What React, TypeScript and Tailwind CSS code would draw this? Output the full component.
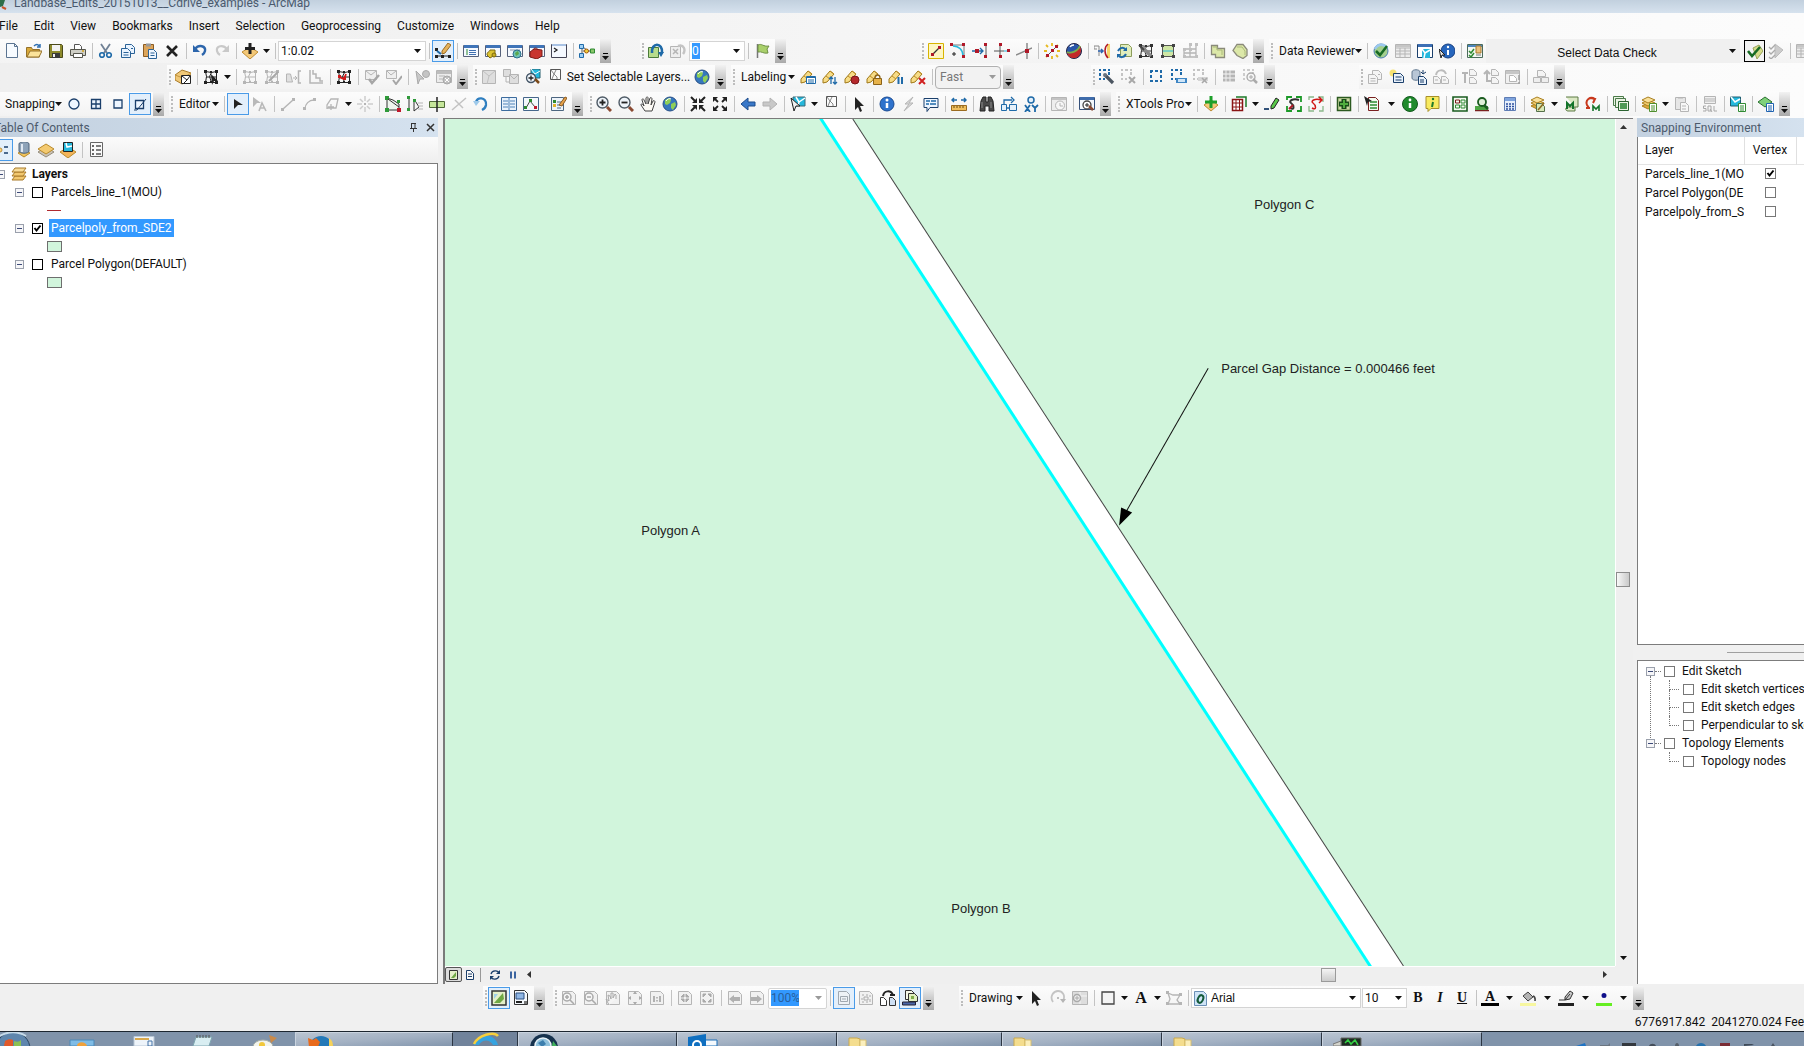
import React from "react";
import clsx from "clsx";

// [path data, fill, stroke, stroke width]
type Shape = [string, string, string?, number?];

const GRAY = "#b5b5b5";
const INK = "#222222";
const RED = "#b01828";
const BLUE = "#1f6aa8";
const NAVY = "#1b3f6b";
const GREEN = "#2f8a32";
const BROWN = "#8a6a20";
const CYAN = "#25b8dc";

const dot = (x: number, y: number, r: number) =>
  `M${x - r} ${y}a${r} ${r} 0 1 0 ${r * 2} 0a${r} ${r} 0 1 0 ${-r * 2} 0z`;
const sq = (x: number, y: number, s: number) => `M${x} ${y}h${s}v${s}h${-s}z`;
const box = (x: number, y: number, w: number, h: number) =>
  `M${x} ${y}h${w}v${h}h${-w}z`;
const page = (x: number, y: number, w: number, h: number) =>
  `M${x} ${y}h${w - 3}l3 3v${h - 3}h${-w}z`;

const mesh = (color: string): Shape[] => [
  ["M2.5 2.5l6 1 5-1M2.5 2.5l1 5-1 6h11v-11M8.5 3.5l-2 4 2 6M3 8h10", "none", color],
  [sq(1, 1, 3) + sq(7, 2, 2) + sq(12, 1, 3) + sq(1, 12, 3) + sq(7, 12, 2) + sq(12, 12, 3), color],
];
const pencil: Shape[] = [
  ["M1 10L8 2l4 3-7 8-4 1z", "#f7dc86", "#a07818"],
  ["M8 2l4 3M4 7l4 3", "none", "#c08f28"],
];
const windowBase: Shape[] = [
  [box(0.5, 2.5, 15, 11), "#f5f9ff", "#56617a"],
  [box(1, 2, 14, 3), "#3f74b8"],
];
const globe: Shape[] = [
  [dot(8, 8, 7), "#3677bd", "#274f86"],
  ["M3 4l4-2 2 2-1 3-3 2-2-1zM9 8l4-2 1 3-3 5-2-2z", "#8fcf57"],
  ["M4 5c1-2 4-3 5-2", "none", "#ffffff"],
];
const dashed = (color: string): Shape => [
  "M1 2h3M6 2h3M11 2h2M2 1v3M2 6v3M2 11v2M1 12h3M6 12h3M11 12h2M12 1v3M12 6v3M12 11v2",
  "none",
  color,
  2,
];
// small marquee for tools that carry a second mark at the bottom right
const dashedSmall = (color: string): Shape => [
  "M0 1h2M4 1h3M9 1h2M1 0v2M1 4v3M1 9v2M4 10h2M10 3v3",
  "none",
  color,
  2,
];
const docs = (color: string, fill = "#f4f4f4"): Shape[] => [
  [page(5.5, 1.5, 9, 9), fill, color],
  [page(1.5, 5.5, 9, 9), fill, color],
  ["M3.5 9.5h5M3.5 12h5M11 5.5h2", "none", color],
];
const lens = (color: string): Shape => ["M10 10l4 4", "none", color, 2.5];
const pageGray: Shape[] = [[page(1.5, 1.5, 13, 13), "#f1f1f1", GRAY]];
const stack: Shape[] = [
  ["M1 10l6-3 7 3-7 3z", "#dba93c", "#a98020"],
  ["M1 7l6-3 7 3-7 3z", "#f2cc70", "#a98020"],
  ["M1 4l6-3 7 3-7 3z", "#f9e09a", "#a98020"],
];
const listTag = (color: string): Shape[] => [
  [box(8.5, 7.5, 7, 8), "#ffffff", color],
  ["M10 10h4M10 12h4M10 14h4", "none", color],
];

const ICONS: Record<string, Shape[]> = {
  // standard
  new: [[page(2.5, 0.5, 11, 14), "#f7fbff", "#5b7491"], ["M10.5 .5v3h3", "none", "#5b7491"]],
  open: [
    ["M.5 14V4.5h5l1 2h7V14z", "#d9a93a", "#94712a"],
    ["M1 14l3-6h12l-3 6z", "#fbe39a", "#94712a"],
    ["M8 3c2-2 4-2 5 0M14 1v3h-3", "none", "#2f6fb2", 1.5],
  ],
  save: [
    ["M1.5 1.5h12l1 1v12h-13z", "#8d8a2c", "#4b4a1a"],
    [box(4, 2, 8, 6), "#f3f3f3"],
    [box(4, 10, 8, 5), "#3a3a3a"],
    [box(5, 11, 2, 3), "#eeeeee"],
  ],
  print: [
    ["M4.5 6V1.5h5l2 2V6", "#ffffff", "#555555"],
    ["M.5 6.5h15v6h-15z", "#cfcfc6", "#55554c"],
    ["M3.5 10.5h9v4h-9z", "#ffffff", "#55554c"],
    ["M12 8h2", "none", "#d0a020", 1.5],
  ],
  cut: [
    ["M3 1l6 9M12 1L6 10", "none", "#708195", 1.8],
    [dot(4, 12, 2.3) + dot(11, 12, 2.3), "none", BLUE, 1.6],
  ],
  copy: docs("#2a6297", "#eaf4ff"),
  paste: [
    [box(1.5, 1.5, 10, 12), "#dca55b", "#8a5b21"],
    [box(4, 0.5, 5, 3), "#999999"],
    [page(6.5, 6.5, 8, 9), "#eef6ff", "#2a6297"],
    ["M8.5 10h4M8.5 12.5h4", "none", "#2a6297"],
  ],
  del: [["M3 3l10 10M13 3L3 13", "none", INK, 2.6]],
  undo: [["M3 6c4-5 11-3 10 2-.4 2-1.5 3-3 4", "none", "#2d66ac", 2.4], ["M1 2v7h7z", "#2d66ac"]],
  redo: [["M13 6C9 1 2 3 3 8c.4 2 1.5 3 3 4", "none", "#c9c9c9", 2.2], ["M15 2v7H8z", "#c9c9c9"]],
  add: [["M0 9l8-5 8 5-8 7z", "#f3c878", "#bd8c35"], ["M8 0v11M3 5.5h10", "none", INK, 3]],
  edit: [
    ["M1 13h14", "none", INK],
    [sq(0, 5, 3) + sq(0, 12, 3) + sq(6, 12, 3) + sq(13, 12, 3), INK],
    ["M7 8l6-8 3 2-6 8-3 1z", "#e6b25b", "#9a6b22"],
    ["M2 8l4 3", "none", BLUE, 2],
  ],
  toc: [...windowBase, ["M3 7h2M3 9h2M3 11h2", "none", GREEN], ["M6 7.5h7M6 9.5h7M6 11.5h7", "none", "#4070b0"]],
  catalog: [...windowBase, ["M2 12c0-4 2-2 3-5h5v5l-5 3z", "#ddc432", "#7d6a10"], [dot(9, 12, 2), "#c8ad22", "#7d6a10"]],
  search: [...windowBase, ["M3 7h10", "none", "#8a96a8"], [dot(10, 11, 4), "#6ec3b5", "#2c6e8e"], ["M8 10l3-2 1 3-3 2z", "#5ba84b"]],
  toolbox: [...windowBase, ["M1 9l4-3 8 1v6l-5 3-7-2z", "#c8362f", "#7d1a16"], ["M4 7c1-3 5-2 5 0", "none", "#7d1a16"]],
  python: [[box(0.5, 1.5, 15, 13), "#f5f9ff", "#444455"], [box(1, 1, 14, 2), "#a9c2e4"], ["M3 5l3 2-3 2", "none", INK, 1.3]],
  model: [
    ["M3 4v9M4 4l5 4H4M8 8h4", "none", "#555555"],
    [sq(0.5, 1.5, 4) + sq(0.5, 10.5, 4), "#9fd0f5", BLUE],
    [dot(7.5, 8, 2), "#f5d23a", "#a05a10"],
    [sq(11.5, 6, 4), "#8ac76a", GREEN],
  ],

  // versioning
  reload: [
    [box(0.5, 4.5, 10, 10), "#b7dc8c", "#4b7a3a"],
    ["M4 10c-1-11 11-11 10 0", "none", BLUE, 2.6],
    ["M10 9h6l-3 5z", BLUE],
  ],
  reloadx: [
    [box(0.5, 3.5, 10, 11), "#eeeeee", GRAY],
    ["M3 6l5 5M8 6l-5 5", "none", GRAY, 1.5],
    ["M8 3c6-2 8 4 5 8", "none", "#c4c4c4", 2.4],
  ],
  flag: [["M3.5 1v14", "none", "#777777", 1.5], ["M4 2c4-2 5 2 11 1l-2 3 1 4c-5 1-6-2-10-1z", "#a9d06b", "#6e8f45"]],

  // advanced editing
  eLine: [
    [box(0.5, 0.5, 15, 15), "#fdf6c4", "#d8b400"],
    ["M4 12L12 4", "none", "#333333", 1.3],
    [sq(3, 10, 3) + sq(10, 3, 3), RED],
  ],
  eCurve: [["M2 2h12v12", "none", "#777777"], ["M3 3c6 0 10 4 10 10", "none", CYAN, 1.5], [sq(0, 0, 3) + sq(12, 0, 3) + sq(12, 12, 3), RED], ["M4 9v4M2 11h4", "none", INK]],
  eExt: [["M14 1v14", "none", "#555555"], ["M0 8h11M8 5l3 3-3 3", "none", BLUE, 1.3], [sq(12, 0, 3) + sq(12, 12, 3) + sq(3, 6, 4), RED]],
  eTrim: [["M6 1v14M0 8h10", "none", "#555555"], ["M10 8h3", "none", CYAN], [sq(5, 0, 3) + sq(5, 12, 3) + sq(13, 6, 3), RED]],
  eInt: [["M0 12L16 5M11 0v16", "none", "#8a8a8a", 1.5], [sq(9, 6, 4), RED]],
  burst: [
    ["M2 2l2 2M8 0v3M14 2l-2 2M0 8h3M13 8h3M2 14l2-2M8 13v3M14 14l-2-2", "none", "#e7b91e", 1.8],
    ["M4 12L12 4", "none", "#555555"],
    [sq(2, 11, 3) + sq(7, 6, 3) + sq(11, 2, 3), RED],
  ],
  ball: [[dot(8, 8, 7.5), "#2a56a8", "#222244"], ["M1 10C4 12 13 8 14 3c3 6-1 12-6 12-4 0-6-2-7-5z", "#c22a2a"], ["M1 9c4 2 11-1 13-6", "none", "#7fae4a", 1.8], ["M4 4c1-2 3-2 4-2", "none", "#ffffff", 1.5]],
  alignE: [["M0 3h5v10M0 3v3h3", "none", "#888888"], ["M4 8h5M7 6l2 2-2 2", "none", "#2c63b0", 1.5], [box(13, 1, 3, 14), "#f6d56a"], ["M14 1c-4 3-4 10 0 14", "none", RED, 1.5]],
  swap: [[page(4.5, 1.5, 11, 12), "#e1eebc", "#8c9c5c"], ["M2 8c2-4 6-4 8-1M10 11c-2 4-6 4-8 1", "none", BLUE, 2], ["M11 4v4H7zM1 15v-4h4z", BLUE]],
  wrenchE: [...mesh("#333333"), ["M4 4l9 9", "none", "#8a8a8a", 3.5], ["M1 2l5 5", "none", "#444444", 2]],
  rectE: [[box(2.5, 2.5, 11, 11), "#cfe6a4", "#555555"], ["M3 8h10", "none", CYAN], [sq(1, 1, 3) + sq(12, 1, 3) + sq(1, 12, 3) + sq(12, 12, 3), "#444444"]],
  gridE: [["M2 6h12v8H2zM8 1v13M14 1v5M2 10h12", "none", GRAY, 1.3], [sq(7, 0, 3) + sq(13, 0, 3) + sq(1, 5, 3) + sq(7, 5, 3) + sq(1, 12, 3) + sq(13, 12, 3), "#c0c0c0"]],
  polyA: [["M1.5 2.5h6v3h7v9h-9v-3h-4z", "#dce8a8", "#8a8a7a", 1.3], ["M3 4h4v3h5v5", "none", "#aab87a"]],
  polyB: [["M5 1.5h6l4 5v6l-4 3-6-3-4-5z", "#dce8a8", "#8a8a7a", 1.3], ["M5 4h5l3 4v4", "none", "#aab87a"]],

  // data reviewer
  rev: [[dot(8, 8, 7), "#a3cf8e", "#4a7db2"], ["M2 6c3-6 10-5 12-1", "none", "#9bc8ee", 2.5], ["M3 8l4 4 7-9", "none", "#176b24", 2.5]],
  table: [[box(0.5, 1.5, 15, 13), "#ececec", GRAY], ["M1 5h14M1 8h14M1 11h14M5 5v9M10 5v9", "none", GRAY], [box(1, 2, 14, 2), "#c6c6c6"]],
  win: [[box(0.5, 1.5, 15, 13), "#ffffff", NAVY], [box(1, 1, 14, 3), "#3d6fb4"], [box(5, 6, 8, 9), CYAN], ["M5 6l3 4 5-3M8 10l-1 5", "none", "#ffffff", 1.5]],
  infoSel: [[dot(9, 8, 7), "#2766bd", "#173f80"], ["M9 7v5", "none", "#ffffff", 2], [dot(9, 4, 1.2), "#ffffff"], ["M0 6l6 6H3l-1 3z", "#e8e8e8", INK]],
  checks: [[box(0.5, 1.5, 15, 13), "#f4f8f4", "#4b6b5a"], [box(1, 2, 14, 2), "#4d86bd"], ["M2 8l2 2 3-4M2 12l2 2 3-4", "none", GREEN, 1.5], [box(9, 3, 5, 7), "#ecc27b", "#a8772c"], ["M9 12h5", "none", "#777777"]],
  runCheck: [["M6 5l6-3 4 6-6 8z", "#d5dc8a", "#9aa45a"], ["M1 8l4 5 8-9", "none", "#176b24", 2.6]],
  runGray: [["M7 1l8 6-8 8z", "#cccccc", "#bbbbbb"], ["M1 4l2 2 4-4M1 9l2 2 4-4M1 14l2 2 4-4", "none", "#aaaaaa", 1.3]],

  // topology
  topo: [["M0 6l7-5 9 3v6l-9 5-7-4z", "#f0c878", "#a97b28"], ["M0 6l8 3 8-5", "none", "#c2943f"], [box(6.5, 6.5, 9, 8), "#ffffff", INK], ["M7 7l5 4 3-4M12 11l-3 3", "none", INK]],
  mesh: [...mesh(INK), ["M8 5l7 7h-4l-2 4z", INK]],
  meshG1: mesh(GRAY),
  meshG2: [...mesh(GRAY), ["M5 12l9-9", "none", "#a8a8a8", 2]],
  alignG: [["M.5 5h4l2 8h-6z", "#e0e0e0", GRAY], ["M7 9h4M9 7l2 2-2 2", "none", GRAY], ["M15 2h-2.5v12H15", "none", GRAY, 1.5]],
  stairG: [["M2 1v13h13M5 1v4h3v4h4v3h3", "none", GRAY, 1.5]],
  meshR: [...mesh(INK), ["M3 8l5 2 2-5", "none", "#d01818", 1.8], [sq(2, 6, 3) + sq(7, 8, 3), "#d01818"]],
  validG: [[box(1.5, 1.5, 11, 9), "#efefef", GRAY], ["M2 2l5 4 5-4", "none", GRAY], ["M5 10l3 4 7-8", "none", "#a6a6a6", 2.5]],
  valid2G: [[box(0.5, 1.5, 10, 8), "#efefef", GRAY], ["M1 2l4 4 5-4", "none", GRAY], ["M7 11l3 4 6-8", "none", "#a6a6a6", 2]],
  fixG: [["M2 2l8 8H6l-2 5z", "#c9c9c9", "#aaaaaa"], [dot(12, 5, 3.5), "#c4c4c4", "#aaaaaa"]],
  listxG: [[box(0.5, 1.5, 15, 12), "#ececec", GRAY], [box(1, 2, 14, 3), "#bdbdbd"], ["M3 7h6M3 10h6", "none", GRAY], [dot(11, 11, 4), "#c0c0c0", "#a8a8a8"], ["M9 9l4 4M13 9l-4 4", "none", "#ffffff"]],

  // selection
  selG: [[box(1.5, 1.5, 13, 13), "#dedede", GRAY], ["M2 2l6 5 6-5M8 7l-2 8", "none", "#c0c0c0"]],
  sel2G: [[box(0.5, 0.5, 7, 7), "#dedede", GRAY], [box(6.5, 5.5, 9, 9), "#dedede", GRAY], ["M7 6l4 4 4-4M3 8v5h3", "none", GRAY]],
  zoomSel: [[box(6, 0, 9, 9), CYAN, "#28606e"], ["M6 0l4 5 5-3", "none", "#ffffff"], [dot(6, 9, 4.5), "#eef4fa", "#445566", 1.3], ["M6 6.5v5M3.5 9h5", "none", INK, 1.3], lens("#7a4a1a")],
  clearSel: [[box(3.5, 0.5, 10, 10), "#fcfcfc", "#555555"], ["M4 1l3 4 2-4M7 5l-2 5M7 5l3 3v2", "none", "#888888"]],
  globe,

  // labeling
  lb1: [...pencil, [box(6.5, 7.5, 9, 7), "#ffffff", BLUE], [box(7, 7, 8, 2), BLUE], ["M8 11h6M8 13h6", "none", BLUE]],
  lb2: [...pencil, ["M9 15V8M7 10l2-2 2 2M13 8v7M11 13l2 2 2-2", "none", BLUE, 1.3]],
  lb3: [...pencil, [dot(11, 11, 4), "#b5282c", "#7a1518"]],
  lb4: [...pencil, [box(7.5, 9.5, 8, 6), "#e6b24a", "#8a6218"], ["M9 9c0-4 5-4 5 0", "none", "#8a6218", 1.3]],
  lb5: [...pencil, ["M10.5 8v7M14 8v7", "none", BLUE, 2]],
  lb6: [...pencil, ["M9 9l6 6M15 9l-6 6", "none", "#d02020", 2]],

  // areas
  dWrench: [dashedSmall(BLUE), ["M6 6l8 8", "none", "#4b5560", 3.2], [dot(6, 6, 2), "#6b7580"]],
  dX: [dashedSmall("#c4c4c4"), ["M8 8l6 6M14 8l-6 6", "none", "#a8a8a8", 2]],
  dNew: [dashed(BLUE)],
  dEdit: [dashedSmall(BLUE), [box(5, 9, 11, 5), "#3f86c4"], [box(7, 10, 7, 3), "#cfe5f7"]],
  dDel: [dashedSmall("#c4c4c4"), [box(5, 8, 10, 4), "#d5d5d5"], ["M9 9l5 5M14 9l-5 5", "none", "#a8a8a8", 1.6]],
  dGrid: [["M2 3h12M2 7h12M2 11h12", "none", GRAY, 3], ["M5 1v12M9 1v12", "none", "#eeeeee"]],
  dZoom: [dashedSmall("#cccccc"), [dot(8, 8, 4), "#f5f5f5", "#aaaaaa", 1.3], ["M8 6v4M6 8h4", "none", "#aaaaaa"], lens("#aaaaaa")],

  // job documents
  docsG: docs(GRAY),
  docNew: [[dot(4, 4, 3.5), "#f6e272"], [page(4.5, 4.5, 10, 9), "#e8f1fb", NAVY], ["M6.5 8h6M6.5 11h6", "none", NAVY]],
  docDb: [["M1 3c0-3 8-3 8 0v6c0 3-8 3-8 0z", "#b8c6d6", "#62788f"], [page(7.5, 7.5, 8, 8), "#e8f1fb", NAVY], ["M9 11h4M9 13h4M12 1v4M10 3l2 2 3-2", "none", NAVY]],
  docsArc: [[page(0.5, 7.5, 7, 7), "#f4f4f4", GRAY], [page(8.5, 7.5, 7, 7), "#f4f4f4", GRAY], ["M3 6c1-6 8-6 10-1", "none", "#bcbcbc", 2], ["M2 11h3M10 11h3", "none", GRAY]],
  docUp: [["M4 14V4M1 4h6", "none", GRAY, 2], [page(8.5, 0.5, 7, 6), "#f4f4f4", GRAY], [page(8.5, 8.5, 7, 6), "#f4f4f4", GRAY]],
  docDn: [["M4 2v10h4M1 5l3-3 3 3", "none", GRAY, 2], [page(8.5, 0.5, 7, 6), "#f4f4f4", GRAY], [page(8.5, 8.5, 7, 6), "#f4f4f4", GRAY]],
  winG: [[box(0.5, 1.5, 14, 13), "#f0f0f0", GRAY], [box(1, 2, 13, 3), "#c6c6c6"], [page(4.5, 6.5, 7, 6), "#ffffff", GRAY], ["M14 6v5M14 13v2", "none", "#a0a0a0", 1.5]],
  printG: [[page(4.5, 1.5, 8, 6), "#f4f4f4", GRAY], [box(0.5, 8.5, 7, 5), "#eeeeee", GRAY], [box(8.5, 8.5, 7, 5), "#eeeeee", GRAY]],

  // snapping and editor
  sPoint: [[dot(8, 8, 5), "#eef6ff", NAVY, 1.3]],
  sEnd: [[box(3.5, 3.5, 9, 9), "#eef6ff", NAVY, 1.3], ["M8 4v9M4 8h9", "none", NAVY, 1.3]],
  sVertex: [[box(4, 4, 8, 8), "#eef6ff", NAVY, 1.3]],
  sEdge: [[box(3.5, 4.5, 8, 8), "#eef6ff", NAVY, 1.3], ["M2 14h3L14 3", "none", NAVY]],
  arrow: [["M4 3l9 6H8l-4 4z", INK]],
  arrowA: [["M1 1l8 6H5l-4 4z", "#b9b9b9"], ["M7 15l3-8 4 8M8 12h4", "none", "#b9b9b9", 1.6]],
  sLine: [["M3 13L13 4", "none", GRAY, 1.5], [sq(1, 12, 3) + sq(12, 2, 3), GRAY]],
  sArc: [["M3 13c0-5 4-9 9-9", "none", GRAY, 1.3], [sq(1, 11, 3) + sq(11, 2, 3), GRAY]],
  sPoly: [["M3 13V9l4-6h7l-2 9H3M7 8v6M4 11h6", "none", GRAY, 1.3]],
  sBurst: [["M8 0v5M8 11v5M0 8h5M11 8h5M3 3l3 3M13 3l-3 3M3 13l3-3M13 13l-3-3", "none", "#cdcdcd", 1.5], [sq(7, 7, 2), GRAY]],
  vEdit: [["M2 2v12h12V8L8 4z", "#eef6ee", "#333333"], [sq(0, 0, 4) + sq(0, 12, 4) + sq(12, 4, 3), "#2f9a3a"], ["M3 3l11 8", "none", "#333333"], [sq(12, 12, 4), "#c0182c"]],
  vShape: [["M2 1v14M7 3v12l5-4z", "none", "#333333"], [sq(0, 0, 3) + sq(0, 12, 3) + sq(6, 3, 3), "#2f9a3a"], ["M11 7h5M11 10h5M11 13h5", "none", GRAY]],
  vCut: [["M.5 5.5h15v6H.5z", "#c5e69a", "#4f6b38"], ["M8 1v15", "none", INK, 1.5]],
  vSplit: [["M1 14L15 2M4 4l8 8", "none", "#c2c2c2", 1.5]],
  vRot: [["M3 7c0-7 11-6 10 2-.3 2-2 4-4 5", "none", "#2f7fc0", 2.3], ["M0 5h7l-4 5z", "#9ec9ea"]],
  attr: [[box(0.5, 1.5, 15, 13), "#e8f2fc", "#3d6c9e"], ["M8 2v12M2 5h5M2 8h5M2 11h5M9 5h5M9 8h5M9 11h5", "none", "#4f83b8"]],
  sketch: [[box(0.5, 1.5, 15, 13), "#f4f8fc", "#46678b"], ["M3 12l4-7 5 6", "none", "#444444"], [sq(1, 10, 3) + sq(6, 3, 3), GREEN], [sq(11, 10, 3), "#c0182c"]],
  tmpl: [[box(0.5, 1.5, 12, 13), "#eef4fa", "#4d6680"], [sq(2, 4, 3), GREEN], [sq(2, 8, 3), "#e2b12e"], ["M6 6h4M6 9h4M6 12h4", "none", "#4d6680"], ["M8 9l6-8 2 1-5 8z", "#e6a24a", "#8a5a22"]],

  // tools
  zin: [[dot(6.5, 6.5, 5.5), "#eef4fa", "#4f5b66", 1.4], ["M6.5 3.5v6M3.5 6.5h6", "none", INK, 1.8], ["M11 11l4 4", "none", "#8a4a32", 3]],
  zout: [[dot(6.5, 6.5, 5.5), "#eef4fa", "#4f5b66", 1.4], ["M3.5 6.5h6", "none", INK, 1.8], ["M11 11l4 4", "none", "#8a4a32", 3]],
  hand: [["M5 15l-4-6c0-2 2-1 3 1L2 4c0-2 2-1 2 0l2 4V2c1-2 2-1 2 0v6l2-6c1-1 2 0 2 1l-1 6 2-4c1-1 2 0 2 1l-3 9z", "#fdfaf5", "#444444"]],
  fixIn: [["M1 1l5 5M15 1l-5 5M1 15l5-5M15 15l-5-5", "none", INK, 2], ["M7 2v5H2zM9 2v5h5zM7 14V9H2zM9 14V9h5z", INK]],
  fixOut: [["M3 3l3 3M13 3l-3 3M3 13l3-3M13 13l-3-3", "none", INK, 1.8], ["M1 1h5L1 6zM15 1h-5l5 5zM1 15h5l-5-5zM15 15h-5l5-5z", INK]],
  back: [["M1 8l7-6v4h7v4H8v4z", "#3a78c8", "#1d4c8c"]],
  fwd: [["M15 8L8 2v4H1v4h7v4z", "#c8c8c8", "#b2b2b2"]],
  selFeat: [[box(3, 1, 12, 9), CYAN, "#3b6a78"], ["M6 1l3 5 6-4M9 6l-1 4", "none", "#ffffff", 1.5], ["M1 2l9 8H6l-2 5z", "#f0f0f0", INK]],
  ptr: [["M4 1l9 9H9l2 5-2 1-2-5-3 3z", INK]],
  info: [[dot(8, 8, 7), "#2e72cc", "#184a92"], ["M8 7v5", "none", "#ffffff", 2.5], [dot(8, 4, 1.5), "#ffffff"]],
  bolt: [["M12 1L4 8h4l-5 7 9-8H8z", "#d9d9d9", GRAY]],
  tip: [["M1 2.5h14v9H7l-3 4v-4H1z", "#eef6ff", NAVY], ["M3 5h4M8 5h5M3 8h3M7 8h6", "none", BLUE, 1.3]],
  measure: [[box(0.5, 9.5, 15, 5), "#f0bf5d", "#9b6b20"], ["M3 10v2M6 10v2M9 10v2M12 10v2", "none", "#6b4a10"], ["M1 4h5M10 4h5M3 2L1 4l2 2M13 2l2 2-2 2", "none", BLUE, 1.5]],
  binoc: [["M2 5l2-4h3v5h2V1h3l2 4 1 10h-5v-5H6v5H1z", "#4a4a4a", INK], ["M3 6v6M12 6v6", "none", "#8c8c8c"]],
  route: [["M3 9V4h8M10 1l3 3-3 3M6 12h3", "none", BLUE, 1.3], [box(0.5, 8.5, 5, 6), "#e4f0fa", BLUE], [box(8.5, 8.5, 7, 6), "#e4f0fa", BLUE]],
  xy: [[dot(8, 4, 3), "#e4f0fa", BLUE, 1.5], ["M2 9l5 7M7 9l-5 7M9 9l3 3 3-3M12 12v4", "none", BLUE, 1.8]],
  timeG: [[box(0.5, 1.5, 15, 13), "#eeeeee", GRAY], [box(1, 2, 14, 2), "#c4c4c4"], [dot(9, 9.5, 4.5), "#f7f7f7", GRAY], ["M9 7v3h3", "none", GRAY]],
  viewer: [[box(0.5, 1.5, 15, 12), "#f4f8fc", "#35507a"], [box(1, 1, 14, 3), "#3f6cab"], [dot(8, 9, 4), "#ffffff", "#444444", 1.3], ["M8 7v4M6 9h4", "none", INK], lens("#8a4a32")],

  // xtools
  xAdd: [["M1 9l7-5 7 5-7 6z", "#f3c878", "#bd8c35"], ["M8 0v12M2 6h12", "none", "#1da02a", 3]],
  xTable: [["M5 1h10v10", "none", "#1c7a28", 1.5], [box(1.5, 3.5, 10, 11), "#ffffff", "#8a1414", 1.5], ["M2 7h9M2 11h9M5 4v10M8.5 4v10", "none", "#8a1414"]],
  xPen: [["M7 10l5-8 3 2-5 8-3 1z", "#5ac84a", INK], ["M0 13h5", "none", NAVY, 1.8]],
  xSq1: [["M1 4V1h5M10 1h5v5M1 10v5h5M15 10v5h-4", "none", "#1c9a28", 1.8], ["M4 12c5 3 4-3 1-5s2-5 8-3", "none", "#333333", 2], ["M3 13l4-4", "none", RED, 2]],
  xSq2: [["M1 4V1h5M10 1h5v5M1 10v5h5M15 10v5h-4", "none", "#8ab88a", 1.3], ["M4 12c5 3 4-3 1-5s2-5 8-3M11 1l3 3-3 3", "none", "#d01818", 1.5]],
  xPlus: [[box(1.5, 1.5, 13, 13), "#c9d8a0", "#2c5a20", 1.5], ["M8 3v10M3 8h10", "none", "#174d18", 5], ["M8 4v8M4 8h8", "none", "#4fae3e", 2]],
  xSel: [[page(4.5, 1.5, 10, 13), "#f4faf0", "#7a2020"], ["M6 6h7M6 9h7M6 12h7", "none", GREEN, 1.3], ["M0 0l8 5-4 1-1 4z", INK]],
  xInfo: [[dot(8, 8, 7.5), "#1f8a2c", "#125a1c"], ["M8 7v5", "none", "#ffffff", 2.5], [dot(8, 4, 1.4), "#ffffff"]],
  xTip: [["M2 .5h13v12H7l-3 3v-3H2z", "#f8ea60", "#a8902a"], ["M9 6l-1 5", "none", "#1f7a2c", 2], [dot(9, 3, 1.2), "#1f7a2c"]],
  xForm: [[box(1, 1, 14, 14), "#f3faf0", "#1b5c20", 1.6], [box(3.5, 4, 4, 3), "none", "#7a1a1a"], [box(9, 4, 4, 3) + box(3.5, 9, 4, 3) + box(9, 9, 4, 3), "none", GREEN]],
  xFind: [["M1 14.5h14", "none", "#7a2020", 1.5], [box(1, 10, 13, 4), "#4fa545"], [dot(8, 6, 4), "#dff0d8", "#1b5c20", 1.8], ["M10 9l4 4", "none", "#1b5c20", 2.5]],
  xCalc: [[box(2.5, 1.5, 11, 13), "#e8f0fb", "#5f7db4"], [box(3, 2, 10, 3), "#7ea3dd"], ["M4 8h2M7 8h2M10 8h2M4 10.5h2M7 10.5h2M10 10.5h2M4 13h2M7 13h2M10 13h2", "none", "#2c4fa0", 1.6]],
  xStack: [...stack, [page(6.5, 7.5, 8, 8), "#d8e8b8", "#55704a"], ["M8 14l6-7", "none", BROWN, 1.6]],
  xM: [["M3 1h12v10H5c-3 0-3 4 0 4h7v-4", "#dbe8c4", "#5d7a44"], ["M4 13V7l3 3 3-3v6", "none", "#14742a", 2]],
  xLoopM: [["M10 3C5 0 0 4 2 9l2 3M6 2l4 1-2 4M5 12H1", "none", "#c8381c", 2], ["M8 15v-5l3 3 3-3v5", "none", "#14742a", 1.6]],
  xWins: [[box(0.5, 0.5, 10, 9), "#eaf4e4", "#4b7a4a"], [box(2.5, 2.5, 10, 9), "#eaf4e4", "#4b7a4a"], [box(5.5, 5.5, 10, 9), "#eaf4e4", "#2c6230"], [box(7, 7, 7, 6), "#4f9a55"]],
  xStack2: [...stack, ...listTag("#4f8f2f")],
  pasteG: [[box(1.5, 1.5, 10, 12), "#e6e6e6", GRAY], [page(6.5, 6.5, 8, 9), "#f7f7f7", GRAY], ["M8 10h4M8 13h4M4 2h5", "none", GRAY]],
  sqlG: [[box(2.5, 0.5, 11, 7), "#f0f0f0", GRAY], ["M3 3h10M3 5h10", "none", GRAY], ["M4 10H1.5v2.500H4V15H1M6 10h3v5H6zM8 13l2 3M12 10v5h3", "none", "#a8a8a8"]],
  xTrans: [[box(0.5, 1, 10, 9), CYAN, "#1e5d70"], ["M1 1l4 5 5-3", "none", "#ffffff", 1.5], ...listTag(GREEN)],
  xGreen: [["M0 6l7-5 7 5-7 5z", "#7fd07a", "#2a6f30"], ...listTag("#1e62b0")],

  // table of contents
  byDraw: [[dot(2, 5, 2) + dot(2, 11, 2) + dot(6, 8, 2), "#f6cf7e", "#c09038"], ["M10 5h4M10 11h4", "none", NAVY, 1.5]],
  bySrc: [["M2 11l6-3 6 3-6 4z", "#f2c45a", "#b88a2c"], ["M3 2c0-3 10-3 10 0v7c0 3-10 3-10 0z", "#8da2b8", "#4f6379"], ["M6 2v8", "none", "#dfe8f2", 2]],
  byVis: [["M0 10l8-5 8 5-8 5z", "#c9c2b6", "#958c7a"], ["M0 7l8-5 8 5-8 5z", "#f4ca70", "#b88a2c"]],
  bySel: [["M0 10l8-5 8 5-8 6z", "#f2b45a", "#b88a2c"], [box(3.5, 0.5, 9, 9), CYAN, INK], ["M6 1l1 4 5-1", "none", "#ffffff", 1.5]],
  opts: [[box(2.5, 0.5, 12, 14), "#fafafa", "#666666"], [dot(5, 4, 1) + dot(5, 8, 1) + dot(5, 12, 1), "#333333"], ["M8 4h5M8 8h5M8 12h5", "none", "#555555", 1.5]],
  layers: [["M1 14l3-4h11l-3 4z", "#f2c870", "#a97b28"], ["M1 10l3-4h11l-3 4z", "#f2c870", "#a97b28"], ["M1 6l3-4h11l-3 4z", "#f8dc98", "#a97b28"]],

  // layout
  dataView: [[box(1, 1, 14, 14), "#e4efc8", "#333333", 1.5], ["M3 13L12 3l1 6-4 4z", "#6fa845"], ["M3 4h4l-4 5z", "#9fd0e8"]],
  layView: [[page(1.5, 0.5, 13, 14), "#f4f8fc", "#333333"], [box(3, 3, 8, 6), "#8fb6e4", "#2c4f80"], ["M3 12h6", "none", INK, 2], [sq(11, 11, 3), "#777777"]],
  pZin: [...pageGray, [dot(6, 7, 4), "#f6f6f6", "#aaaaaa", 1.5], ["M6 5v4M4 7h4M9 10l4 4", "none", "#aaaaaa", 1.6]],
  pZout: [...pageGray, [dot(6, 7, 4), "#f6f6f6", "#aaaaaa", 1.5], ["M4 7h4M9 10l4 4", "none", "#aaaaaa", 1.6]],
  pHand: [...pageGray, ["M4 15l-3-6 3 2-1-6 2 1 1 3V3h2v5l2-4 1 1v4", "#f5f5f5", "#aaaaaa"]],
  pAll: [...pageGray, ["M8 1l2 3H6zM8 15l2-3H6zM1 8l3-2v4zM15 8l-3-2v4z", "#aaaaaa"]],
  p11: [...pageGray, ["M5 6v6M11 6v6", "none", "#aaaaaa", 1.8], ["M8 7v1.5M8 10v1.5", "none", "#aaaaaa", 1.6]],
  pIn: [...pageGray, ["M7 4v3H4zM9 4v3h3zM7 12V9H4zM9 12V9h3z", "#aaaaaa", "#aaaaaa"]],
  pOut: [...pageGray, ["M4 4h3L4 7zM12 4H9l3 3zM4 12h3l-3-3zM12 12H9l3-3z", "#aaaaaa", "#aaaaaa"]],
  pBack: [...pageGray, ["M2 9l5-4v2h6v4H7v2z", "#b0b0b0"]],
  pFwd: [...pageGray, ["M13 9L8 5v2H2v4h6v2z", "#b0b0b0"]],
  pDraft: [[page(2.5, 1.5, 11, 13), "#eef2f6", "#a0a8b0"], [box(4.5, 6.5, 7, 5), "none", "#a0a8b0"], ["M6 9h4", "none", "#a0a8b0"]],
  pFocus: [...pageGray, ["M4 5h2M8 5h2M12 5v2M4 8v2M4 12h2M8 12h2M12 9v3M6 7h4v3H6z", "none", "#aaaaaa"]],
  pChange: [[page(0.5, 7.5, 6, 8), "#ffffff", "#333333"], [page(9.5, 7.5, 6, 8), "#cfe0f4", "#333333"], ["M3 6c1-6 8-6 10-1M10 5h5", "none", INK, 2]],
  pBook: [[page(3.5, 0.5, 9, 9), "#f4f8e8", "#333333"], [page(6.5, 3.5, 9, 8), "#e0efc0", "#333333"], [box(0.5, 12, 13, 3), "#4a66a8", "#222233"], [sq(9, 6, 3), "#7fae4a"]],

  // drawing
  rotG: [["M3 12C-1 6 4 1 8 1s8 4 5 10", "none", "#c4c4c4", 1.8], [dot(8, 8, 1), "#aaaaaa"], ["M10 9h6l-3 4z", GRAY]],
  zoomElG: [[box(0.5, 1.5, 15, 13), "#dddddd", GRAY], ["M1 6h14M8 2v12", "none", "#f4f4f4"], [dot(5, 8, 3.5), "#efefef", "#aaaaaa", 1.5], ["M5 6v4M3 8h4", "none", "#aaaaaa"]],
  rect: [[box(2, 2, 12, 12), "#f4f4f4", "#444444", 1.3]],
  polyG: [["M2 3l5 2h7l-3 5 3 4H2l2-5z", "none", GRAY, 1.3], [sq(0, 1, 3) + sq(13, 3, 3) + sq(0, 12, 3) + sq(13, 12, 3), GRAY]],
  fill: [[box(0, 13, 16, 3), "#f7f7a0"], ["M3 6l5-4 5 5-5 4z", "#b4b4b4", "#444444"], ["M13 6c3 1 2 4 2 5", "none", "#444444", 1.6]],
  pen: [[box(0, 13, 16, 3), INK], ["M7 7l5-6 3 2-3 6-5 1z", "#c8c8c8", "#333333"], ["M1 10h6l5-6", "none", "#333333"]],
  marker: [[box(0, 13, 16, 3), "#66ee22"], [dot(8, 5.5, 2.5), "#10108a"]],
  mini: [[box(3.5, 3.5, 8, 9), "#e4efc8", "#333333"], ["M5 11l5-6v4l-2 2z", "#6fa845"]],
  miniDoc: [[page(4.5, 3.5, 7, 9), "#fafafa", NAVY], ["M6 7h4M6 9.5h4", "none", NAVY]],
  miniLoop: [["M4 7c1-4 7-4 8-1M12 9c-1 4-7 4-8 1", "none", NAVY, 1.3], ["M13 3v4H9zM3 13V9h4z", NAVY]],
  pause: [["M6 4.5v7M10 4.5v7", "none", "#3b64a0", 2]],
};

function Icon({ name }: { name: string }) {
  return (
    <svg viewBox="0 0 16 16" className="h-4 w-4 shrink-0" aria-hidden="true">
      {(ICONS[name] ?? []).map(([d, fill, stroke, width], i) => (
        <path key={i} d={d} fill={fill} stroke={stroke ?? "none"} strokeWidth={width ?? 1} />
      ))}
    </svg>
  );
}

const Down = ({ gray = false }: { gray?: boolean }) => (
  <svg viewBox="0 0 7 4" className="h-1 w-[7px] shrink-0" aria-hidden="true">
    <path d="M0 0h7L3.5 4z" fill={gray ? "#9a9a9a" : "#111"} />
  </svg>
);

/**
 * Row of tool buttons written as a short string:
 *  - name: a tool, !name: a pressed tool
 *  - |: separator, v / V: narrow or wide drop-down arrow
 */
function Tools({ items }: { items: string }) {
  return (
    <>
      {items.split(" ").map((item, i) => {
        if (item === "|")
          return (
            <div key={i} className="flex w-[6px] shrink-0 justify-center">
              <div className="h-4 w-px bg-[#c3c3c3]" />
            </div>
          );
        if (item === "v" || item === "V")
          return (
            <button
              key={i}
              aria-label="More"
              className={clsx(
                "flex h-[22px] shrink-0 items-center justify-center",
                item === "v" ? "w-[11px]" : "w-4"
              )}
            >
              <Down />
            </button>
          );
        const on = item.startsWith("!");
        const name = on ? item.slice(1) : item;
        return (
          <button
            key={i}
            aria-label={name}
            className={clsx(
              "flex h-[22px] w-[22px] shrink-0 items-center justify-center",
              on && "border border-[#4a9be8] bg-[#e3effb]"
            )}
          >
            <Icon name={name} />
          </button>
        );
      })}
    </>
  );
}

function Bar({
  className,
  grip = true,
  overflow = true,
  children,
}: {
  className?: string;
  grip?: boolean;
  overflow?: boolean;
  children: React.ReactNode;
}) {
  return (
    <div
      className={clsx(
        "flex h-6 shrink-0 items-center bg-linear-to-b from-[#fcfcfc] to-[#f3f3f3]",
        className
      )}
    >
      {grip && (
        <div className="flex w-[5px] shrink-0 justify-center">
          <div className="h-4 border-l-2 border-dotted border-[#bdbdbd]" />
        </div>
      )}
      {children}
      {overflow && (
        <button
          aria-label="Toolbar options"
          className="ml-0.5 flex h-6 w-[11px] shrink-0 flex-col items-center justify-end gap-0.5 bg-linear-to-b from-[#f2f2f2] to-[#a9a9a9] pb-[3px]"
        >
          <span className="h-px w-[5px] bg-black" />
          <Down />
        </button>
      )}
    </div>
  );
}

function MenuButton({ label, className }: { label: string; className: string }) {
  return (
    <button
      className={clsx(
        "flex shrink-0 items-center justify-between pr-0.5 pl-[5px] whitespace-nowrap",
        className
      )}
    >
      {label}
      <Down />
    </button>
  );
}

function EditCombo({
  label,
  value,
  className,
  inputClass,
  gray,
}: {
  label: string;
  value: string;
  className: string;
  inputClass: string;
  gray?: boolean;
}) {
  return (
    <div
      className={clsx(
        "flex h-5 shrink-0 items-center justify-between border border-[#d4d4d4] bg-white pr-1 pl-0.5",
        className
      )}
    >
      <input aria-label={label} defaultValue={value} className={clsx("h-4 outline-none", inputClass)} />
      <button aria-label={`Open ${label}`}>
        <Down gray={gray} />
      </button>
    </div>
  );
}

function PickCombo({
  label,
  value,
  className,
  selectClass,
  gray,
}: {
  label: string;
  value: string;
  className: string;
  selectClass: string;
  gray?: boolean;
}) {
  return (
    <div className={clsx("relative flex shrink-0 items-center", className)}>
      <select
        aria-label={label}
        className={clsx("h-full w-full appearance-none bg-transparent outline-none", selectClass)}
      >
        <option>{value}</option>
      </select>
      <span className="pointer-events-none absolute right-1">
        <Down gray={gray} />
      </span>
    </div>
  );
}

function Check({ id, checked, dark }: { id: string; checked?: boolean; dark?: boolean }) {
  return (
    <span className="relative flex h-[11px] w-[11px] shrink-0">
      <input
        id={id}
        type="checkbox"
        defaultChecked={checked}
        className={clsx(
          "peer h-[11px] w-[11px] appearance-none border bg-white",
          dark ? "border-black" : "border-[#777]"
        )}
      />
      <svg
        viewBox="0 0 11 11"
        className="pointer-events-none absolute inset-0 hidden h-[11px] w-[11px] peer-checked:block"
        aria-hidden="true"
      >
        <path d="M2.5 5l2 2.5 4-5" fill="none" stroke="#000" strokeWidth="2" />
      </svg>
    </span>
  );
}

const Minus = () => (
  <button
    aria-label="Collapse"
    className="flex h-[9px] w-[9px] shrink-0 items-center justify-center border border-[#9aa0ac] bg-[#f6f6f8]"
  >
    <span className="h-px w-[5px] bg-[#3c4a78]" />
  </button>
);

const MENUS = [
  "File", "Edit", "View", "Bookmarks", "Insert", "Selection",
  "Geoprocessing", "Customize", "Windows", "Help",
];

function Toolbars() {
  return (
    <div className="bg-linear-to-r from-[#efefef] to-[#fcfcfc]">
      <nav className="-ml-px flex h-[25px] items-center gap-4">
        {MENUS.map((m) => (
          <button key={m}>{m}</button>
        ))}
      </nav>
      <div className="flex h-[26px] items-center">
        <Bar grip={false} className="pl-px">
          <Tools items="new open save print | cut copy paste del | undo redo | add v |" />
          <EditCombo label="Scale" value="1:0.02" className="w-[148px]" inputClass="w-28" />
          <Tools items="| !edit | toc catalog search toolbox python | model" />
        </Bar>
        <Bar className="ml-[29px]">
          <Tools items="reload reloadx" />
          <EditCombo
            label="Version"
            value="0"
            className="w-14"
            inputClass="w-2 bg-[#3399ff] text-white"
          />
          <Tools items="| flag" />
        </Bar>
        <Bar className="ml-[134px]">
          <Tools items="eLine eCurve eExt eTrim eInt | burst ball | alignE swap wrenchE rectE gridE | polyA polyB" />
        </Bar>
        <Bar className="ml-[5px]" overflow={false}>
          <MenuButton label="Data Reviewer" className="w-[90px]" />
          <Tools items="| rev table win infoSel | checks" />
          <PickCombo
            label="Data check"
            value="Select Data Check"
            className="mr-1 h-6 w-[254px] bg-[#f0f0f0]"
            selectClass="pt-1 pr-3 text-center font-['Liberation_Sans',sans-serif]"
          />
          <button
            aria-label="Run data check"
            className="flex h-[22px] w-[21px] items-center justify-center border border-black bg-[#f4f4f4]"
          >
            <Icon name="runCheck" />
          </button>
          <Tools items="runGray | table" />
        </Bar>
      </div>
      <div className="flex h-[26px] items-center">
        <Bar className="ml-[167px]">
          <Tools items="topo | mesh v | meshG1 meshG2 alignG stairG | meshR | validG valid2G | fixG listxG" />
        </Bar>
        <Bar className="ml-[5px]">
          <Tools items="selG sel2G zoomSel clearSel" />
          <button className="w-[125px] whitespace-nowrap">Set Selectable Layers...</button>
          <Tools items="globe" />
        </Bar>
        <Bar className="ml-[5px]">
          <MenuButton label="Labeling" className="w-[61px]" />
          <Tools items="lb1 lb2 lb3 lb4 lb5 lb6 |" />
          <PickCombo
            label="Label quality"
            value="Fast"
            className="h-[23px] w-[66px] rounded-sm border border-[#b0b0b0] bg-[#f2f2f2]"
            selectClass="pl-1 text-[#777]"
            gray
          />
        </Bar>
        <Bar className="ml-[77px]">
          <Tools items="dWrench dX | dNew dEdit dDel | dGrid dZoom" />
        </Bar>
        <Bar className="ml-[84px]">
          <Tools items="docsG docNew docDb docsArc | docUp docDn winG | printG" />
        </Bar>
      </div>
      <div className="flex h-7 items-center">
        <Bar grip={false}>
          <MenuButton label="Snapping" className="w-[63px]" />
          <Tools items="sPoint sEnd sVertex !sEdge" />
        </Bar>
        <Bar className="ml-[5px]">
          <MenuButton label="Editor" className="w-[47px]" />
          <Tools items="| !arrow arrowA | sLine sArc sPoly v sBurst | vEdit vShape vCut vSplit vRot | attr sketch | tmpl" />
        </Bar>
        <Bar className="ml-[5px]">
          <Tools items="zin zout hand globe | fixIn fixOut | back fwd | selFeat v clearSel | ptr | info bolt tip | measure | binoc route xy | timeG | viewer" />
        </Bar>
        <Bar className="ml-[5px]">
          <MenuButton label="XTools Pro" className="w-[73px]" />
          <Tools items="| xAdd | xTable v xPen xSq1 xSq2 | xPlus | xSel V xInfo xTip | xForm xFind | xCalc | xStack v xM xLoopM | xWins | xStack2 v pasteG | sqlG | xTrans | xGreen" />
        </Bar>
      </div>
    </div>
  );
}

const PANEL_TITLE =
  "flex h-[19px] shrink-0 items-center bg-linear-to-r from-[#c3d1e0] to-[#d5e2ef] text-[#4c5a6c]";

function TocLayer({
  id,
  name,
  checked,
  selected,
  line,
}: {
  id: string;
  name: string;
  checked?: boolean;
  selected?: boolean;
  line?: boolean;
}) {
  return (
    <li>
      <div className="flex h-[18px] items-center pl-[15px]">
        <Minus />
        <span className="w-2" />
        <Check id={id} checked={checked} dark />
        <label
          htmlFor={id}
          className={clsx("ml-1.5 px-0.5 leading-[18px]", selected && "bg-[#3399ff] text-white")}
        >
          {name}
        </label>
      </div>
      <div className="flex h-[18px] items-center pl-[47px]">
        {line ? (
          <div className="h-px w-[14px] bg-[#b02a30]" />
        ) : (
          <div className="h-[11px] w-[15px] border border-[#6e6e6e] bg-[#d1f5dc]" />
        )}
      </div>
    </li>
  );
}

function TableOfContents() {
  return (
    <aside className="flex w-[438px] shrink-0 flex-col">
      <div className={clsx(PANEL_TITLE, "justify-between pr-[3px]")}>
        <h2 className="-ml-1.5">Table Of Contents</h2>
        <div className="flex items-center gap-2">
          <button aria-label="Pin">
            <svg viewBox="0 0 9 9" className="h-[9px] w-[9px]">
              <path d="M2.5 0v5M6 0v5M2 .5h5M1 5.5h7M4.5 6v3" fill="none" stroke="#333" />
            </svg>
          </button>
          <button aria-label="Close">
            <svg viewBox="0 0 9 9" className="h-[9px] w-[9px]">
              <path d="M1 1l7 7M8 1L1 8" fill="none" stroke="#333" strokeWidth="1.5" />
            </svg>
          </button>
        </div>
      </div>
      <div className="flex h-[26px] shrink-0 items-center bg-linear-to-b from-[#fbfbfb] to-[#eeeeee]">
        <div className="-ml-[9px] flex items-center">
          <Tools items="!byDraw bySrc byVis bySel | opts" />
        </div>
      </div>
      <ul className="flex-1 border-t border-r border-b border-[#7c7c7c] bg-white pt-px">
        <li className="flex h-[18px] items-center">
          <span className="-ml-1">
            <Minus />
          </span>
          <span className="ml-1.5 flex">
            <Icon name="layers" />
          </span>
          <span className="ml-[5px] font-bold">Layers</span>
        </li>
        <TocLayer id="toc-line" name="Parcels_line_1(MOU)" line />
        <TocLayer id="toc-sde" name="Parcelpoly_from_SDE2" checked selected />
        <TocLayer id="toc-poly" name="Parcel Polygon(DEFAULT)" />
      </ul>
    </aside>
  );
}

function MapCanvas() {
  return (
    <svg
      viewBox="0 0 1170 846"
      preserveAspectRatio="xMidYMid slice"
      className="h-full w-full bg-[#d1f5dc] font-['Liberation_Sans',sans-serif] text-[13px]"
      role="img"
      aria-label="Map"
    >
      <path d="M375 0h33l550 846h-33z" fill="#fff" />
      <path d="M408 0l550 846" stroke="#444" strokeWidth="1" />
      <path d="M375 -2l551 850" stroke="#00ffff" strokeWidth="3" />
      <path d="M763 249L680 394" stroke="#111" strokeWidth="1" />
      <path d="M674 406l2-18 11 5z" fill="#000" />
      <g fill="#222">
        <text x="839" y="90" textAnchor="middle">Polygon C</text>
        <text x="226" y="416" textAnchor="middle">Polygon A</text>
        <text x="536" y="793" textAnchor="middle">Polygon B</text>
        <text x="776" y="254">Parcel Gap Distance = 0.000466 feet</text>
      </g>
    </svg>
  );
}

function MapView() {
  return (
    <main className="ml-[5px] grid min-w-0 flex-1 grid-cols-[1fr_18px] grid-rows-[1fr_18px] border-t border-l-2 border-[#7a7a7a] bg-[#efefef]">
      <div className="min-h-0 min-w-0 overflow-hidden">
        <MapCanvas />
      </div>
      <div className="flex flex-col items-center border-l border-white py-1.5 pr-[3px]">
        <svg viewBox="0 0 7 4" className="h-1 w-[7px]">
          <path d="M0 4h7L3.5 0z" fill="#333" />
        </svg>
        <div className="grow-[54]" />
        <div className="h-[15px] w-[14px] border border-[#8c8c8c] bg-linear-to-r from-[#f8f8f8] to-[#c9c9c9]" />
        <div className="grow-[45]" />
        <Down />
      </div>
      <div className="flex items-center border-t border-white pb-0.5">
        <button
          aria-label="Data view"
          className="flex h-[15px] w-[17px] items-center justify-center rounded-xs border border-[#555] bg-[#dcdcdc]"
        >
          <Icon name="mini" />
        </button>
        <button aria-label="Layout view" className="flex w-4">
          <Icon name="miniDoc" />
        </button>
        <div className="mx-0.5 h-3.5 w-px bg-[#999]" />
        <button aria-label="Refresh" className="ml-1 flex">
          <Icon name="miniLoop" />
        </button>
        <button aria-label="Pause drawing" className="ml-0.5 flex">
          <Icon name="pause" />
        </button>
        <svg viewBox="0 0 4 7" className="ml-1.5 h-[7px] w-1">
          <path d="M4 0v7L0 3.5z" fill="#333" />
        </svg>
        <div className="grow-[791]" />
        <div className="h-[14px] w-[15px] border border-[#9a9a9a] bg-linear-to-b from-[#f4f4f4] to-[#cccccc]" />
        <div className="grow-[267]" />
        <svg viewBox="0 0 4 7" className="mr-2 h-[7px] w-1">
          <path d="M0 0v7l4-3.5z" fill="#333" />
        </svg>
      </div>
      <div />
    </main>
  );
}

const SNAP_LAYERS = [
  { name: "Parcels_line_1(MOU)", vertex: true },
  { name: "Parcel Polygon(DEFAULT)", vertex: false },
  { name: "Parcelpoly_from_SDE2", vertex: false },
];

const SNAP_TREE = [
  { name: "Edit Sketch", children: ["Edit sketch vertices", "Edit sketch edges", "Perpendicular to sketch"] },
  { name: "Topology Elements", children: ["Topology nodes"] },
];

function SnappingEnvironment() {
  return (
    <aside className="ml-1 flex w-[167px] shrink-0 flex-col overflow-hidden">
      <h2 className={clsx(PANEL_TITLE, "pl-1")}>Snapping Environment</h2>
      <div className="h-[508px] shrink-0 border-b border-l border-[#7c7c7c] bg-white">
        <table className="w-[167px] table-fixed">
          <thead>
            <tr className="h-[27px] border-b border-[#e4e4e4]">
              <th className="w-[106px] border-r border-[#e0e0e0] pl-[7px] text-left font-normal">Layer</th>
              <th className="w-[52px] border-r border-[#e0e0e0] font-normal">Vertex</th>
              <th />
            </tr>
          </thead>
          <tbody>
            {SNAP_LAYERS.map((l, i) => (
              <tr key={l.name} className="h-[19px]">
                <td className="overflow-hidden pl-[7px] leading-[18px] whitespace-nowrap">
                  <label htmlFor={`snap-${i}`}>{l.name}</label>
                </td>
                <td>
                  <div className="flex justify-center">
                    <Check id={`snap-${i}`} checked={l.vertex} />
                  </div>
                </td>
                <td />
              </tr>
            ))}
          </tbody>
        </table>
      </div>
      <div className="flex h-[15px] shrink-0 items-center pl-[90px]">
        <div className="h-px flex-1 bg-[#a0a0a0]" />
      </div>
      <ul className="flex-1 border-t border-l border-[#7c7c7c] bg-white pt-px pl-2">
        {SNAP_TREE.map((group, g) => (
          <li key={group.name} className={clsx(g === 0 && "relative")}>
            {g === 0 && (
              <span className="absolute top-[14px] left-1 h-[62px] border-l border-dotted border-[#777]" />
            )}
            <div className="flex h-[18px] items-center">
              <Minus />
              <span className="mr-[3px] w-1.5 border-t border-dotted border-[#777]" />
              <Check id={`grp-${g}`} />
              <label htmlFor={`grp-${g}`} className="pl-[7px]">{group.name}</label>
            </div>
            <ul className="ml-[23px]">
              {group.children.map((c, i) => (
                <li key={c} className="flex h-[18px] items-center">
                  <span className="mr-1 h-[18px] w-2.5 shrink-0">
                    <span className="block h-2.5 border-b border-l border-dotted border-[#777]" />
                    {i < group.children.length - 1 && (
                      <span className="block h-2 border-l border-dotted border-[#777]" />
                    )}
                  </span>
                  <Check id={`grp-${g}-${i}`} />
                  <label htmlFor={`grp-${g}-${i}`} className="pl-[7px] whitespace-nowrap">{c}</label>
                </li>
              ))}
            </ul>
          </li>
        ))}
      </ul>
    </aside>
  );
}

const SERIF =
  "flex h-[22px] w-[22px] items-center justify-center font-['Liberation_Serif',serif] font-bold";

function BottomBars() {
  return (
    <div className="flex h-7 shrink-0 items-center">
      <Bar className="ml-[483px]">
        <Tools items="!dataView layView" />
      </Bar>
      <Bar className="ml-2">
        <Tools items="pZin pZout pHand pAll p11 | pIn pOut | pBack pFwd" />
        <EditCombo
          label="Layout zoom"
          value="100%"
          className="h-[21px] w-[59px] rounded-xs"
          inputClass="w-7 bg-[#3399ff] text-[#2a5f9c]"
          gray
        />
        <Tools items="| !pDraft pFocus pChange !pBook" />
      </Bar>
      <Bar className="ml-[25px]">
        <MenuButton label="Drawing" className="w-[61px]" />
        <Tools items="ptr rotG zoomElG | rect v" />
        <button aria-label="Text" className={clsx(SERIF, "text-base")}>A</button>
        <Tools items="v polyG |" />
        <div className="flex h-5 w-[170px] items-center border border-[#d4d4d4] bg-white pl-0.5">
          <svg viewBox="0 0 13 15" className="h-[15px] w-[13px] shrink-0" aria-hidden="true">
            <path d="M.5.5h9l3 3v11H.5z" fill="#cfe4f7" stroke="#6a8fb5" />
            <ellipse cx="6.5" cy="8" rx="2.5" ry="4" transform="rotate(25 6.5 8)" fill="none" stroke="#145a3a" strokeWidth="2" />
          </svg>
          <PickCombo
            label="Font"
            value="Arial"
            className="h-full flex-1"
            selectClass="pl-1 font-['Liberation_Sans',sans-serif]"
          />
        </div>
        <PickCombo
          label="Font size"
          value="10"
          className="ml-px h-5 w-[45px] border border-[#d4d4d4] bg-white"
          selectClass="pl-0.5"
        />
        <button className={clsx(SERIF, "text-sm")}>B</button>
        <button className={clsx(SERIF, "text-sm italic")}>I</button>
        <button className={clsx(SERIF, "text-sm underline")}>U</button>
        <Tools items="|" />
        <button
          aria-label="Font colour"
          className="flex h-[22px] w-[22px] flex-col items-center justify-end pb-[3px]"
        >
          <span className="font-['Liberation_Serif',serif] text-sm leading-[13px] font-bold">A</span>
          <span className="h-[3px] w-[18px] bg-black" />
        </button>
        <Tools items="V fill V pen V marker V" />
      </Bar>
    </div>
  );
}

const TASK =
  "relative flex h-full shrink-0 items-start overflow-hidden border-t border-r border-l border-[#c9d3df] border-r-[#2c3643] bg-linear-to-br from-[#b9c4d1] via-[#a3b1c3] to-[#8396ad] pl-2.5";

const Folder = () => (
  <svg viewBox="0 0 20 12" className="mt-1 h-3 w-5">
    <path d="M1 1h8l3 1v10H1z" fill="#f4dd8e" stroke="#c9a94f" />
    <path d="M12 3h6v9h-6z" fill="#fbefbd" stroke="#d8bf70" />
  </svg>
);

const TRAY: [string, string][] = [
  ["M2 4l9-3 1 3z", "#1f73c4"],
  ["M2 3h8l2-2v3H2z", "#6b7580"],
  ["M0 1h14v3H0z", "#33383e"],
  ["M3 4c1-3 6-3 7 0z", "#444e5a"],
  ["M5 4c0-4 4-4 4 0z", "#565f6a"],
  ["M2 4c2-4 8-4 10 0z", "#2671ad"],
  ["M2 1h10v3H2z", "#7a2c34"],
  ["M2 4V2h8l2 1", "#3f4a58"],
  ["M5 4l2-3 2 3z", "#4b5663"],
];

function Taskbar() {
  return (
    <footer className="flex h-[15px] shrink-0 overflow-hidden border-t border-[#1c2630] bg-[#8093aa]">
      <div className="flex w-[295px] shrink-0 items-start justify-between pr-4">
        <svg viewBox="0 0 32 14" className="h-3.5 w-8">
          <circle cx="13" cy="17" r="17" fill="#5f86ad" stroke="#2a4560" />
          <path d="M0 4C8-1 18-1 26 4" fill="none" stroke="#c6dbea" strokeWidth="2" />
          <path d="M5 9c3-2 6-2 8-1v6H4z" fill="#e0592a" />
          <path d="M14 9c3 1 5 1 7-1v6h-7z" fill="#8cc152" />
        </svg>
        <svg viewBox="0 0 26 14" className="h-3.5 w-[26px]">
          <path d="M1 8h24v6H1z" fill="#7fbce6" stroke="#4b88b8" />
          <path d="M8 14c0-5 9-5 10 0z" fill="#f0a23c" />
        </svg>
        <svg viewBox="0 0 22 14" className="h-3.5 w-[22px]">
          <path d="M1 4.5h20V14H1z" fill="#eef4fa" stroke="#b9c7d6" />
          <path d="M2 6h14v2H2z" fill="#d9a94e" />
          <path d="M15 9h4v5h-4z" fill="none" stroke="#4272a8" />
        </svg>
        <svg viewBox="0 0 22 14" className="h-3.5 w-[22px]">
          <path d="M4 5h16l-3 9H1z" fill="#d9eef2" stroke="#7ea6b0" />
          <path d="M5 3v3M8 3v3M11 3v3M14 3v3M17 3v3" stroke="#555" />
        </svg>
        <svg viewBox="0 0 28 14" className="h-3.5 w-7">
          <ellipse cx="12" cy="15" rx="10" ry="7" fill="#f2f4ee" stroke="#a9b0a8" />
          <circle cx="11" cy="13" r="3" fill="#f2c83c" />
          <path d="M18 3l8 3-6 5z" fill="#c98a4a" />
        </svg>
      </div>
      <div className={clsx(TASK, "w-[158px]")}>
        <svg viewBox="0 0 30 13" className="h-[13px] w-[30px]">
          <circle cx="15" cy="15" r="12" fill="#2479b8" />
          <path d="M2 5l5 2 3-2 4 4-2 5H3z" fill="#e86a1c" />
          <path d="M23 5c4 3 4 6 4 9h-4z" fill="#f6d25a" />
        </svg>
      </div>
      <div className="flex w-[65px] shrink-0 justify-center border-r border-[#2c3643] bg-[#71839b]">
        <svg viewBox="0 0 30 13" className="h-[13px] w-[30px]">
          <circle cx="16" cy="16" r="10" fill="none" stroke="#35a3e0" strokeWidth="5" />
          <path d="M4 12C8 3 24-1 28 4" fill="none" stroke="#f6cf3c" strokeWidth="2.5" />
        </svg>
      </div>
      <div className={clsx(TASK, "w-[159px]")}>
        <svg viewBox="0 0 30 13" className="h-[13px] w-[30px]">
          <circle cx="15" cy="15" r="14" fill="#16324e" />
          <circle cx="14" cy="13" r="8" fill="#8fc1dc" stroke="#e8f2f8" strokeWidth="1.5" />
          <path d="M9 10l5-3 3 4-4 3z" fill="#3d7fae" />
          <path d="M24 8l4 5h-5z" fill="#3fb05a" />
        </svg>
      </div>
      <div className={clsx(TASK, "w-40")}>
        <svg viewBox="0 0 30 13" className="h-[13px] w-[30px]">
          <path d="M13 7h16v6H13z" fill="#f4f9fd" stroke="#1a6fb8" />
          <path d="M0 4l18-3v12H0z" fill="#0f6fc0" />
          <circle cx="9" cy="12" r="4" fill="none" stroke="#fff" strokeWidth="2" />
        </svg>
      </div>
      <div className={clsx(TASK, "w-[165px]")}><Folder /></div>
      <div className={clsx(TASK, "w-40")}><Folder /></div>
      <div className={clsx(TASK, "w-40")}><Folder /></div>
      <div className={clsx(TASK, "w-40")}>
        <svg viewBox="0 0 30 13" className="h-[13px] w-[30px]">
          <path d="M8 5h20v8H8z" fill="#1e2c22" stroke="#666" />
          <path d="M12 10l3-3 3 4 4-4 3 5" fill="none" stroke="#35d045" strokeWidth="1.5" />
          <path d="M0 11l8-3v5H0z" fill="#d4d4cc" stroke="#777" />
        </svg>
      </div>
      <div className="flex flex-1 items-end justify-end gap-2.5 pr-6">
        {TRAY.map(([d, color]) => (
          <svg key={d} viewBox="0 0 14 4" className="h-1 w-3.5">
            <path d={d} fill={color} />
          </svg>
        ))}
      </div>
    </footer>
  );
}

export default function App() {
  return (
    <div className="flex h-screen flex-col overflow-hidden bg-[#f0f0f0] font-[Roboto,'Open_Sans',sans-serif] text-xs text-[#111]">
      <header className="flex h-[13px] shrink-0 items-center bg-linear-to-b from-[#c2d0de] to-[#d6e2ee]">
        <svg viewBox="0 0 8 10" className="-mt-1 h-2.5 w-2">
          <path d="M0 0h5l-2 6-3 1z" fill="#2d6e4a" />
          <path d="M2 7l4 2" stroke="#c8552a" strokeWidth="2" />
        </svg>
        <h1 className="-mt-2 ml-1.5 text-[#4a5a6e]">Landbase_Edits_20151013__Cdrive_examples - ArcMap</h1>
      </header>
      <Toolbars />
      <div className="flex min-h-0 flex-1">
        <TableOfContents />
        <MapView />
        <SnappingEnvironment />
      </div>
      <BottomBars />
      <div className="flex h-[19px] shrink-0 items-center justify-end overflow-hidden">
        <p className="-mr-1 whitespace-pre">6776917.842  2041270.024 Feet</p>
      </div>
      <Taskbar />
    </div>
  );
}
